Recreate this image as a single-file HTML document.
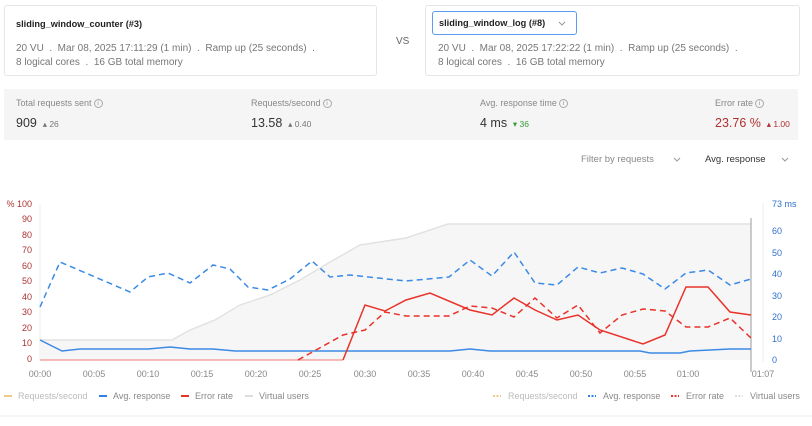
<!DOCTYPE html>
<html><head><style>
*{margin:0;padding:0;box-sizing:border-box}
body{width:812px;height:426px;background:#fff;font-family:"Liberation Sans",sans-serif;position:relative;overflow:hidden;color:#333}
.a{position:absolute;white-space:nowrap}
.card{position:absolute;border:1px solid #e6e6e6;border-radius:3px;background:#fff}
.t{font-size:9.2px;font-weight:bold;color:#222}
.m{font-size:10px;color:#777}
.lbl{font-size:9px;color:#888}
.v{font-size:12.5px;color:#333}
.d{font-size:8.5px;color:#777}
.i{display:inline-block;width:9px;height:9px;border:1px solid #aaa;border-radius:50%;font-size:6px;text-align:center;line-height:8px;vertical-align:middle;color:#888;margin-left:2px}
</style></head><body>
<div class="card" style="left:4px;top:5px;width:373px;height:71px"></div>
<div class="a t" style="left:16px;top:19px">sliding_window_counter (#3)</div>
<div class="a m" style="left:16px;top:43px">20 VU &nbsp;. &nbsp;Mar 08, 2025 17:11:29 (1 min) &nbsp;. &nbsp;Ramp up (25 seconds) &nbsp;.</div>
<div class="a m" style="left:16px;top:57px">8 logical cores &nbsp;. &nbsp;16 GB total memory</div>
<div class="a m" style="left:396px;top:36px;color:#666">VS</div>
<div class="card" style="left:425px;top:5px;width:375px;height:71px"></div>
<div class="a" style="left:432px;top:11px;width:145px;height:24px;border:1.5px solid #5b9cf0;border-radius:3px"></div>
<div class="a t" style="left:439px;top:18px">sliding_window_log (#8)</div>
<div class="a m" style="left:438px;top:43px">20 VU &nbsp;. &nbsp;Mar 08, 2025 17:22:22 (1 min) &nbsp;. &nbsp;Ramp up (25 seconds) &nbsp;.</div>
<div class="a m" style="left:438px;top:57px">8 logical cores &nbsp;. &nbsp;16 GB total memory</div>

<div class="a" style="left:4px;top:89px;width:794px;height:51px;background:#f5f5f5"></div>
<div class="a lbl" style="left:16px;top:98px">Total requests sent<span class="i">i</span></div>
<div class="a v" style="left:16px;top:116px">909 <span class="d">&nbsp;▴ 26</span></div>
<div class="a lbl" style="left:251px;top:98px">Requests/second<span class="i">i</span></div>
<div class="a v" style="left:251px;top:116px">13.58 <span class="d">&nbsp;▴ 0.40</span></div>
<div class="a lbl" style="left:480px;top:98px">Avg. response time<span class="i">i</span></div>
<div class="a v" style="left:480px;top:116px">4 ms <span class="d" style="color:#3a9a3a">&nbsp;▾ 36</span></div>
<div class="a lbl" style="left:715px;top:98px">Error rate<span class="i">i</span></div>
<div class="a v" style="left:715px;top:116px;color:#b03030">23.76 % <span class="d" style="color:#b03030">&nbsp;▴ 1.00</span></div>

<div class="a" style="left:581px;top:154px;font-size:9.5px;color:#888">Filter by requests</div>
<div class="a" style="left:705px;top:154px;font-size:9.5px;color:#333">Avg. response</div>

<svg class="a" style="left:0;top:0" width="812" height="426" font-family="Liberation Sans, sans-serif" font-size="9">
<g fill="none" stroke="#999" stroke-width="1">
<polyline points="559,22 562,25 565,22"/>
<polyline points="674,158 677,161 680,158"/>
<polyline points="782,158 785,161 788,158"/>
</g>
<g fill="#a33" text-anchor="end">
<text x="32" y="207">% 100</text><text x="32" y="222">90</text><text x="32" y="238">80</text><text x="32" y="253">70</text><text x="32" y="269">60</text><text x="32" y="284">50</text><text x="32" y="300">40</text><text x="32" y="315">30</text><text x="32" y="331">20</text><text x="32" y="346">10</text><text x="32" y="362">0</text>
</g>
<g fill="#2f6fc8">
<text x="772" y="207">73 ms</text><text x="772" y="234">60</text><text x="772" y="256">50</text><text x="772" y="277">40</text><text x="772" y="299">30</text><text x="772" y="320">20</text><text x="772" y="342">10</text><text x="772" y="363">0</text>
</g>
<line x1="763" y1="203" x2="763" y2="362" stroke="#eee"/>
<line x1="40" y1="204" x2="40" y2="360" stroke="#eee"/>
<path d="M40,340 L172,340 L190,330 L215,320 L240,305 L270,295 L300,280 L330,262 L360,245 L406,238 L448,224 L751,224 L751,360 L40,360Z" fill="#f6f6f6"/>
<path d="M40,340 L172,340 L190,330 L215,320 L240,305 L270,295 L300,280 L330,262 L360,245 L406,238 L448,224 L751,224" fill="none" stroke="#e2e2e2" stroke-width="1.5"/>
<line x1="751" y1="218" x2="751" y2="372" stroke="#999"/>
<g fill="#888" text-anchor="middle" font-size="9">
<text x="40" y="377">00:00</text><text x="94" y="377">00:05</text><text x="148" y="377">00:10</text><text x="202" y="377">00:15</text><text x="256" y="377">00:20</text><text x="310" y="377">00:25</text><text x="365" y="377">00:30</text><text x="419" y="377">00:35</text><text x="473" y="377">00:40</text><text x="527" y="377">00:45</text><text x="581" y="377">00:50</text><text x="635" y="377">00:55</text><text x="688" y="377">01:00</text><text x="763" y="377">01:07</text>
</g>
<path d="M40,360 L343,360" stroke="#f4a0a0" stroke-width="1.5"/>
<path d="M40,307 L60,262 L130,292 L148,277 L168,273 L190,283 L213,265 L230,269 L248,287 L268,290 L290,279 L312,261 L330,277 L350,275 L406,281 L449,277 L470,260 L492,276 L514,252 L535,283 L557,285 L578,267 L600,273 L622,268 L643,274 L665,289 L686,273 L708,270 L730,285 L751,279" fill="none" stroke="#3b8ae6" stroke-width="1.5" stroke-dasharray="6,4"/>
<path d="M40,340 L62,351 L80,349 L148,349 L170,347 L190,349 L213,349 L235,351 L450,351 L470,349 L490,351 L640,351 L650,353 L680,353 L690,351 L730,349 L751,349" fill="none" stroke="#3b8ae6" stroke-width="1.5"/>
<path d="M298,360 L343,335 L365,330 L385,312 L406,316 L449,316 L470,306 L492,308 L514,317 L535,298 L557,318 L578,305 L600,333 L622,315 L643,309 L665,311 L686,327 L708,327 L730,318 L751,338" fill="none" stroke="#e8322a" stroke-width="1.5" stroke-dasharray="6,4"/>
<path d="M343,360 L365,305 L385,311 L406,300 L430,293 L470,310 L492,315 L514,298 L535,310 L557,320 L578,315 L600,330 L643,344 L665,335 L686,287 L708,287 L730,312 L751,315" fill="none" stroke="#e8322a" stroke-width="1.5"/>
<g font-size="9" fill="#888">
<line x1="4" y1="396" x2="12" y2="396" stroke="#f3c98a" stroke-width="2"/><text x="18" y="399" fill="#bbb">Requests/second</text>
<line x1="99" y1="396" x2="107" y2="396" stroke="#2f80e8" stroke-width="2"/><text x="113" y="399">Avg. response</text>
<line x1="181" y1="396" x2="189" y2="396" stroke="#e8322a" stroke-width="2"/><text x="195" y="399">Error rate</text>
<line x1="245" y1="396" x2="253" y2="396" stroke="#ddd" stroke-width="2"/><text x="259" y="399">Virtual users</text>
<line x1="493" y1="396" x2="501" y2="396" stroke="#f3c98a" stroke-width="2" stroke-dasharray="2,1.5"/><text x="508" y="399" fill="#bbb">Requests/second</text>
<line x1="588" y1="396" x2="596" y2="396" stroke="#2f80e8" stroke-width="2" stroke-dasharray="2,1.5"/><text x="603" y="399">Avg. response</text>
<line x1="671" y1="396" x2="679" y2="396" stroke="#e8322a" stroke-width="2" stroke-dasharray="2,1.5"/><text x="686" y="399">Error rate</text>
<line x1="735" y1="396" x2="743" y2="396" stroke="#ddd" stroke-width="2" stroke-dasharray="2,1.5"/><text x="750" y="399">Virtual users</text>
</g>
<line x1="0" y1="416" x2="812" y2="416" stroke="#eee"/>
</svg>
</body></html>
